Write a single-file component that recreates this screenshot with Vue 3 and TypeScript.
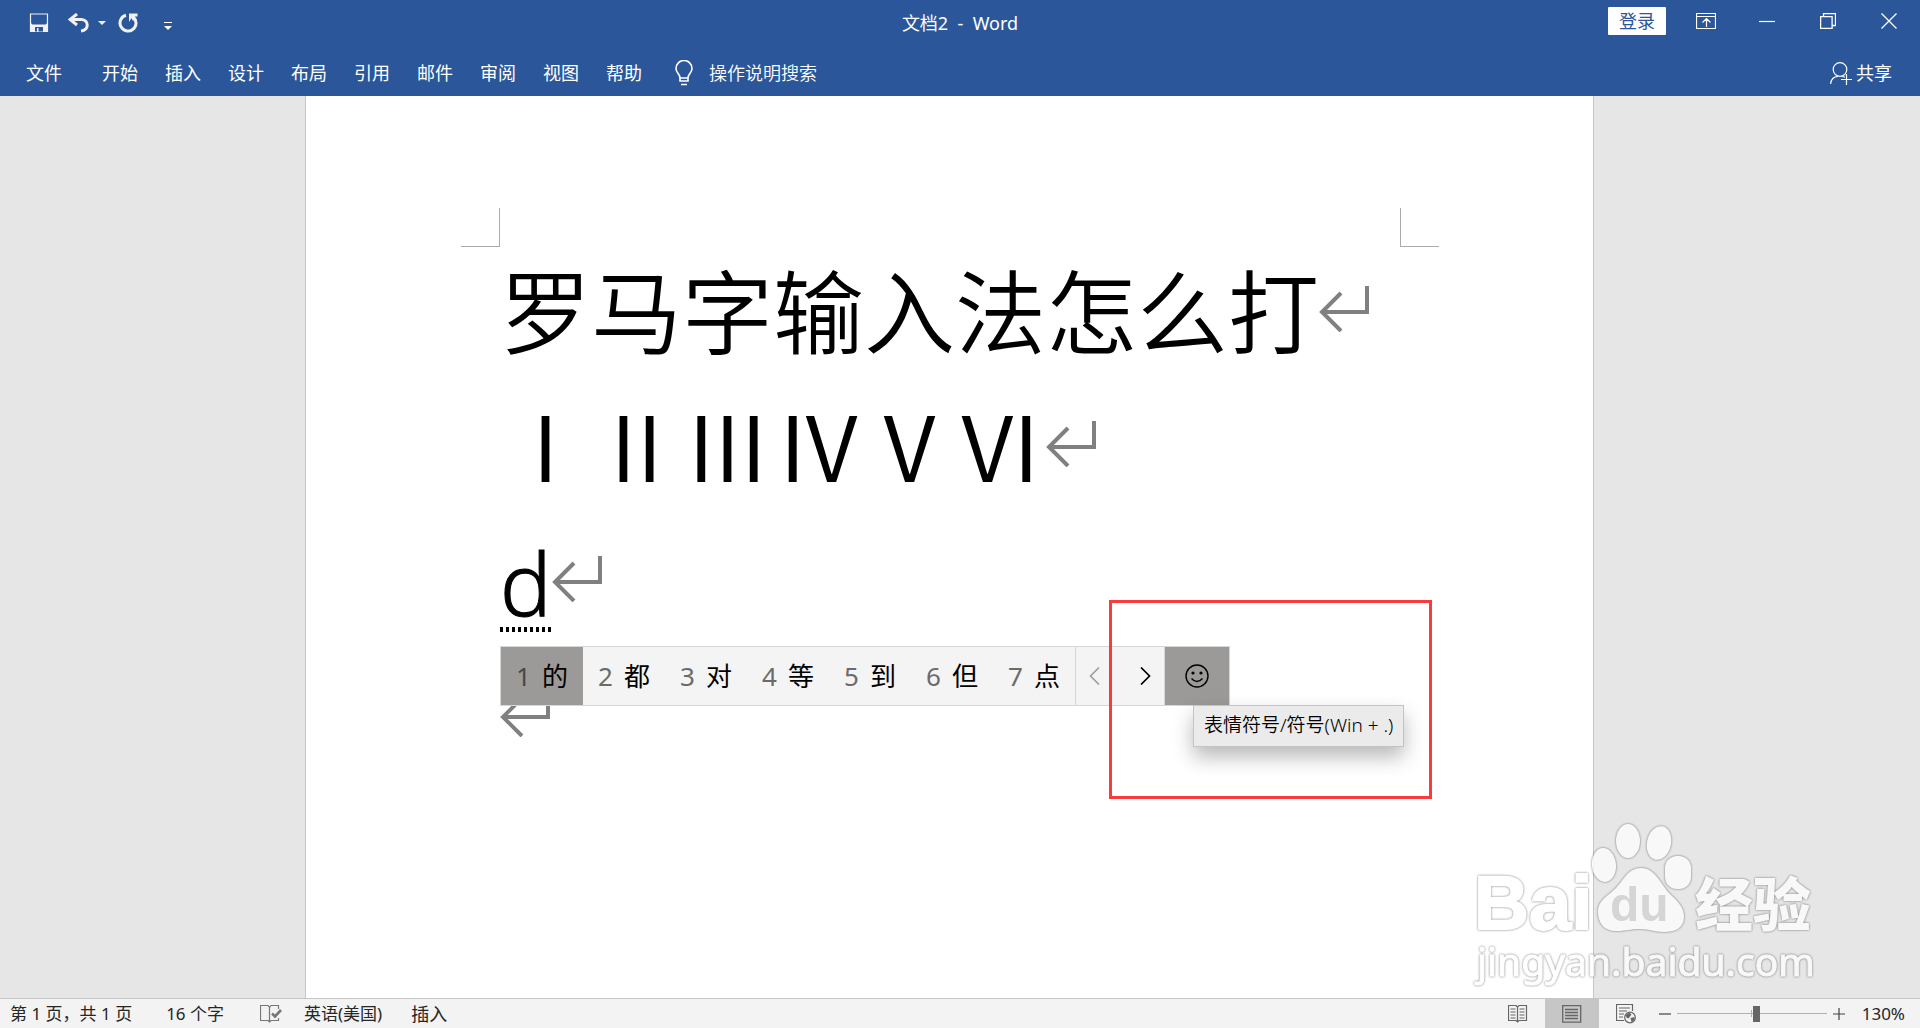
<script setup lang="ts">
import { ref } from 'vue'

interface Candidate {
  key: number
  text: string
}

const tabs: string[] = ['开始', '插入', '设计', '布局', '引用', '邮件', '审阅', '视图', '帮助']

const candidates: Candidate[] = ['的', '都', '对', '等', '到', '但', '点'].map((text, i) => ({
  key: i + 1,
  text,
}))

const selected = ref(1)
const zoom = ref(130)
</script>

<template>
  <div class="app">
    <header class="chrome">
      <div class="titlebar">
        <div class="quick">
          <button class="icon-btn" aria-label="保存">
            <svg width="20" height="20" viewBox="0 0 20 20">
              <path d="M1.5 1h17v17.500h-17z" fill="none" stroke="#f1f1f1" stroke-width="1.200" />
              <path d="M1 11.500h18V19H1z" fill="#f1f1f1" />
              <path d="M2 10l1.500 2h13l1.500-2v2H2z" fill="#f1f1f1" />
              <path d="M6 14h8v4.500H6z" fill="#2b579a" />
              <path d="M8 15h1.500v4H8z" fill="#f1f1f1" />
            </svg>
          </button>
          <button class="icon-btn undo" aria-label="撤消">
            <svg width="22" height="20" viewBox="0 0 22 20">
              <path d="M9 1L2 6.500L9 12" fill="none" stroke="#f1f1f1" stroke-width="3" />
              <path d="M3 6.500H13.500C21 7 21.500 17 13 18" fill="none" stroke="#f1f1f1" stroke-width="3" />
            </svg>
          </button>
          <button class="icon-btn caret" aria-label="撤消选项">
            <svg width="8" height="4" viewBox="0 0 8 4"><path d="M0 0h8L4 4z" fill="#f1f1f1" /></svg>
          </button>
          <button class="icon-btn redo" aria-label="重复">
            <svg width="20" height="20" viewBox="0 0 20 20">
              <path d="M8 2.300A8 8 0 1 0 15.500 4.200" fill="none" stroke="#f1f1f1" stroke-width="3" />
              <path d="M11 0.500H19.500V3.500H16.500L17.500 7.500H14.500L13.500 5L11 9z" fill="#f1f1f1" />
            </svg>
          </button>
          <button class="icon-btn more" aria-label="自定义快速访问工具栏">
            <svg width="8" height="8" viewBox="0 0 8 8"><path d="M0 0h8v1H0zM0 4h8L4 8z" fill="#fff" /></svg>
          </button>
        </div>
        <h1 class="title">文档2&nbsp; -&nbsp; Word</h1>
        <div class="window">
          <button class="login">登录</button>
          <button class="win-btn" aria-label="功能区显示选项">
            <svg width="20" height="16" viewBox="0 0 20 16">
              <g fill="none" stroke="#fff">
                <path d="M0.500 0.500h19v15H0.500zM0.500 3.500h19M10.500 14V6M6.500 9.500l4-4l4 4" stroke-width="1.200" />
              </g>
            </svg>
          </button>
          <button class="win-btn" aria-label="最小化">
            <svg width="16" height="16" viewBox="0 0 16 16"><path d="M0 8.500h16" stroke="#fff" stroke-width="1.200" /></svg>
          </button>
          <button class="win-btn" aria-label="向下还原">
            <svg width="16" height="16" viewBox="0 0 16 16">
              <path d="M0.600 3.600h11.500v11.800H0.600zM3.500 3.500v-3h12v12h-3" fill="none" stroke="#fff" stroke-width="1.300" />
            </svg>
          </button>
          <button class="win-btn" aria-label="关闭">
            <svg width="16" height="16" viewBox="0 0 16 16">
              <path d="M0.500 0.500l15 15M15.500 0.500l-15 15" stroke="#fff" stroke-width="1.300" />
            </svg>
          </button>
        </div>
      </div>
      <nav class="ribbon">
        <button class="tab file">文件</button>
        <button v-for="t in tabs" :key="t" class="tab">{{ t }}</button>
        <button class="tell-me">
          <svg width="18" height="26" viewBox="0 0 18 26">
            <g fill="none" stroke="#fff" stroke-width="1.600">
              <path d="M5 18C5 14 1 13 1 8.500a8 8 0 0 1 16 0C17 13 13 14 13 18zM5 18v3h8v-3M6 24.500h6" />
            </g>
          </svg>
          <span>操作说明搜索</span>
        </button>
        <button class="share">
          <svg width="22" height="23" viewBox="0 0 22 23">
            <g fill="none" stroke="#fff" stroke-width="1.200">
              <circle cx="10" cy="7.500" r="6.800" />
              <path d="M0.600 22C1 17.500 4 14.500 8 14.300M12 14.300l3 1M16.500 12v11M11 17.500h11" />
            </g>
          </svg>
          <span>共享</span>
        </button>
      </nav>
    </header>

    <main class="workspace">
      <article class="sheet">
        <div class="body">
          <span class="crop crop-left"></span>
          <span class="crop crop-right"></span>
          <p class="line">罗马字输入法怎么打<svg class="mark" viewBox="0 0 50 46"><path d="M48 0V26H3M22 7L3 26L22 45" /></svg></p>
          <p class="line">ⅠⅡⅢⅣⅤⅥ<svg class="mark" viewBox="0 0 50 46"><path d="M48 0V26H3M22 7L3 26L22 45" /></svg></p>
          <div class="line composing">
            <span class="typed">d</span><svg class="mark" viewBox="0 0 50 46"><path d="M48 0V26H3M22 7L3 26L22 45" /></svg>
            <div class="ime">
              <button
                v-for="c in candidates"
                :key="c.key"
                class="candidate"
                :class="{ active: c.key === selected }"
                @click="selected = c.key"
              >
                <span class="num">{{ c.key }}</span><span>{{ c.text }}</span>
              </button>
              <div class="pager">
                <button class="arrow" aria-label="上一页">
                  <svg width="11" height="18" viewBox="0 0 11 18"><path d="M10 0.500L1.500 9L10 17.500" fill="none" stroke="#999" stroke-width="1.500" /></svg>
                </button>
                <button class="arrow" aria-label="下一页">
                  <svg width="11" height="18" viewBox="0 0 11 18"><path d="M1 0.500L9.500 9L1 17.500" fill="none" stroke="#000" stroke-width="1.700" /></svg>
                </button>
              </div>
              <div class="emoji-wrap">
                <button class="emoji" aria-label="表情符号" aria-describedby="emoji-tip">
                  <svg width="24" height="24" viewBox="0 0 24 24">
                    <circle cx="12" cy="12" r="11" fill="none" stroke="#000" stroke-width="1.400" />
                    <circle cx="8" cy="9" r="1.600" />
                    <circle cx="16" cy="9" r="1.600" />
                    <path d="M6.500 14.500Q12 20.500 17.500 14.500" fill="none" stroke="#000" stroke-width="1.400" />
                  </svg>
                </button>
                <div id="emoji-tip" class="tip" role="tooltip">表情符号/符号(Win + .)</div>
              </div>
            </div>
          </div>
          <p class="line"><svg class="mark" viewBox="0 0 50 46"><path d="M48 0V26H3M22 7L3 26L22 45" /></svg></p>
          <span class="highlight"></span>
        </div>
      </article>

      <svg class="watermark" width="360" height="180" viewBox="0 0 360 180">
        <g fill="#fff">
          <text x="0" y="113" class="wm-bai">Bai</text>
          <ellipse cx="130" cy="49" rx="12" ry="17" transform="rotate(-6 130 49)" />
          <ellipse cx="154" cy="25" rx="12" ry="17" />
          <ellipse cx="185" cy="27" rx="12" ry="17" transform="rotate(12 185 27)" />
          <rect x="191" y="40" width="26" height="33" rx="12" />
          <path d="M167 52C180 52 186 66 194 76C202 84 210 90 210 101C210 112 201 116 190 116C180 116 176 113 166 113C156 113 152 115 142 115C130 115 124 107 124 96C124 84 134 80 142 72C150 64 154 52 167 52z" />
          <text x="221" y="110" class="wm-cn">经验</text>
          <text x="3" y="160" class="wm-url">jingyan.baidu.com</text>
        </g>
        <text x="136" y="105" class="wm-du">du</text>
      </svg>
    </main>

    <footer class="status">
      <span class="pages">第 1 页，共 1 页</span>
      <span class="words">16 个字</span>
      <svg class="proof" width="22" height="18" viewBox="0 0 22 18">
        <g fill="none" stroke="#777">
          <path d="M9.500 2.500L8 0.500H0.500v15H8l1.500 1.500L11 15.500h7.500V13M9.500 2.500V17M9.500 2.500L11 0.500h7.500V4" stroke-width="1.200" />
          <path d="M12 8.500l3 3L21 5" stroke-width="2.600" />
        </g>
      </svg>
      <span class="lang">英语(美国)</span>
      <span class="mode">插入</span>
      <div class="views">
        <button class="view" aria-label="阅读视图">
          <svg width="20" height="18" viewBox="0 0 20 18">
            <path d="M9.500 2L8 0.500H0.500v15H8l1.500 1.500L11 15.500h7.500v-15H11zM9.500 2v15M2.500 4h5M2.500 7h5M2.500 10h5M2.500 13h5M11.500 4h5M11.500 7h5M11.500 10h5M11.500 13h5" fill="none" stroke="#666" stroke-width="1.200" />
          </svg>
        </button>
        <button class="view current" aria-label="页面视图">
          <svg width="20" height="18" viewBox="0 0 20 18">
            <path d="M0.700 0.700h18v16.500h-18zM3 4.500h13M3 7.500h13M3 10.500h13M3 13.500h13" fill="none" stroke="#666" stroke-width="1.300" />
          </svg>
        </button>
        <button class="view" aria-label="Web 版式视图">
          <svg width="20" height="20" viewBox="0 0 20 20">
            <path d="M8 16.500H0.500v-16h16V7M3 4h11M3 7h8M3 10h5M3 13h4" fill="none" stroke="#666" stroke-width="1.200" />
            <circle cx="14" cy="13.500" r="5.300" fill="#f3f3f3" stroke="#666" stroke-width="1.200" />
            <path d="M9.500 11l4-2.500l2 2l-3 4l-2-1zM14.500 14l4-1v3l-3 2z" fill="#666" />
          </svg>
        </button>
      </div>
      <div class="zoom">
        <button class="step" aria-label="缩小">
          <svg width="12" height="12" viewBox="0 0 12 12"><path d="M0 6h12" stroke="#444" stroke-width="1.200" /></svg>
        </button>
        <input v-model.number="zoom" class="slider" type="range" min="10" max="234" aria-label="缩放级别" />
        <button class="step" aria-label="放大">
          <svg width="12" height="12" viewBox="0 0 12 12"><path d="M0 6h12M6 0v12" stroke="#444" stroke-width="1.200" /></svg>
        </button>
        <span class="percent">{{ zoom }}%</span>
      </div>
    </footer>
  </div>
</template>

<style>
body {
  margin: 0;
}
</style>

<style scoped>
.app {
  display: flex;
  flex-direction: column;
  min-height: 100vh;
  font-family: 'Noto Sans', 'Noto Sans CJK SC', sans-serif;
  font-size: 18px;
  line-height: 24px;
  color: #000;
  background: #e6e6e6;
}
button {
  margin: 0;
  padding: 0;
  border: 0;
  background: none;
  font: inherit;
  color: inherit;
}
svg {
  display: block;
}

.chrome {
  background: #2b579a;
  color: #fff;
}
.titlebar {
  display: grid;
  grid-template-columns: 1fr auto 1fr;
  align-items: center;
  height: 46px;
}
.quick {
  display: flex;
  align-items: center;
  padding-left: 29px;
}
.undo {
  margin-left: 19px;
}
.caret {
  margin-left: 8px;
}
.redo {
  margin-left: 12px;
}
.more {
  margin: 6px 0 0 26px;
}
.title {
  margin: 0;
  font-size: 18px;
  font-weight: 400;
}
.window {
  display: flex;
  justify-content: flex-end;
  align-items: center;
  align-self: start;
  height: 42px;
  padding-right: 1px;
}
.login {
  width: 58px;
  height: 28px;
  margin-right: 9px;
  border-radius: 1px;
  background: #fff;
  color: #2b579a;
}
.win-btn {
  display: flex;
  align-items: center;
  justify-content: center;
  width: 61px;
  height: 42px;
}
.ribbon {
  display: flex;
  align-items: center;
  height: 46px;
  padding: 4px 28px 0 26px;
}
.tab {
  margin-right: 27px;
}
.file {
  margin-right: 40px;
}
.tell-me,
.share {
  display: flex;
  align-items: center;
  gap: 16px;
  margin-left: 6px;
  font-weight: 350;
}
.share {
  gap: 4px;
  margin-left: auto;
  font-weight: 400;
}

.workspace {
  position: relative;
  display: flex;
  flex: 1;
  justify-content: center;
  padding-right: 21px;
}
.sheet {
  box-sizing: border-box;
  width: min(100%, 1289px);
  padding: 144px 193px 0 194px;
  border: solid #c6c6c6;
  border-width: 0 1px;
  background: #fff;
}
.body {
  position: relative;
}
.crop {
  position: absolute;
  top: -32px;
  width: 38px;
  height: 38px;
  border-bottom: 1px solid #ababab;
}
.crop-left {
  right: 100%;
  border-right: 1px solid #ababab;
}
.crop-right {
  left: 100%;
  border-left: 1px solid #ababab;
}
.line {
  display: flex;
  align-items: flex-start;
  height: 135px;
  margin: 0;
  font-family: 'Noto Sans CJK SC', sans-serif;
  font-size: 91px;
  font-weight: 350;
  line-height: 135px;
  white-space: nowrap;
}
.mark {
  width: 50px;
  height: 46px;
  margin-top: 46px;
  fill: none;
  stroke: #808080;
  stroke-width: 4px;
}
.composing {
  position: relative;
}
.typed {
  position: relative;
  font-family: 'Noto Sans', sans-serif;
  font-size: 86px;
  font-weight: 300;
  line-height: 146px;
  -webkit-text-stroke: 1px #000;
}
.typed::after {
  content: '';
  position: absolute;
  left: 0;
  right: 0;
  top: 117px;
  height: 5px;
  background: repeating-linear-gradient(90deg, #000 0 3px, transparent 3px 6px);
}
.ime {
  position: absolute;
  z-index: 1;
  top: 136px;
  left: 0;
  display: flex;
  height: 58px;
  border: 1px solid #d6d6d6;
  background: #f4f4f4;
  font-family: 'Noto Sans', 'Noto Sans CJK SC', sans-serif;
  font-size: 26px;
  font-weight: 400;
  line-height: 36px;
}
.candidate {
  display: flex;
  align-items: center;
  justify-content: center;
  gap: 11px;
  width: 82px;
}
.num {
  color: #6b6b6b;
}
.active {
  background: #9b9a98;
}
.active .num {
  color: #484847;
}
.pager {
  box-sizing: border-box;
  display: flex;
  justify-content: space-between;
  width: 90px;
  padding: 0 13px;
  border: solid #d6d6d6;
  border-width: 0 1px;
}
.arrow {
  display: flex;
  align-items: center;
}
.emoji-wrap {
  position: relative;
  display: flex;
}
.emoji {
  display: flex;
  align-items: center;
  justify-content: center;
  width: 64px;
  background: #9b9a98;
}
.tip {
  position: absolute;
  top: 58px;
  left: 28px;
  padding: 7px 10px 9px;
  border: 1px solid #c4c4c4;
  background: #ebebeb;
  box-shadow: 0 10px 20px rgba(0, 0, 0, 0.28);
  font-size: 19px;
  font-weight: 350;
  line-height: 24px;
  white-space: nowrap;
}
.highlight {
  position: absolute;
  z-index: 2;
  top: 360px;
  left: 609px;
  width: 317px;
  height: 193px;
  border: 3px solid #fa3b3b;
  pointer-events: none;
}

.watermark {
  position: absolute;
  right: 86px;
  bottom: 2px;
  opacity: 0.75;
  filter: drop-shadow(0 0 1px rgba(0, 0, 0, 0.5)) drop-shadow(0 0 1px rgba(0, 0, 0, 0.2));
}
.wm-bai {
  font: 700 76px 'Liberation Sans', sans-serif;
  stroke: #fff;
  stroke-width: 2px;
}
.wm-cn {
  font: 900 58px 'Noto Sans CJK SC', sans-serif;
}
.wm-url {
  font: 400 39px 'Noto Sans', sans-serif;
  stroke: #fff;
  stroke-width: 1px;
}
.wm-du {
  font: 700 48px 'Liberation Sans', sans-serif;
  fill: #d0d0d0;
}

.status {
  display: flex;
  align-items: center;
  height: 29px;
  padding-left: 10px;
  border-top: 1px solid #c6c6c6;
  background: #f3f3f3;
  color: #262626;
  font-size: 17px;
}
.words {
  margin-left: 34px;
}
.proof {
  margin-left: 36px;
}
.lang {
  margin-left: 22px;
}
.mode {
  margin-left: 29px;
  font-size: 18px;
}
.views {
  display: flex;
  align-self: stretch;
  margin-left: auto;
}
.view {
  display: flex;
  align-items: center;
  justify-content: center;
  width: 54px;
}
.current {
  background: #c6c6c6;
}
.zoom {
  display: flex;
  align-items: center;
  padding: 0 15px 0 6px;
}
.slider {
  appearance: none;
  width: 150px;
  height: 16px;
  margin: 0 6px;
  background: linear-gradient(#b0b0b0, #b0b0b0) center / 100% 1px no-repeat,
    linear-gradient(#b0b0b0, #b0b0b0) center / 1px 7px no-repeat;
}
.slider::-webkit-slider-thumb {
  appearance: none;
  width: 7px;
  height: 16px;
  border-radius: 0;
  background: #666;
}
.percent {
  margin-left: 17px;
}
</style>
